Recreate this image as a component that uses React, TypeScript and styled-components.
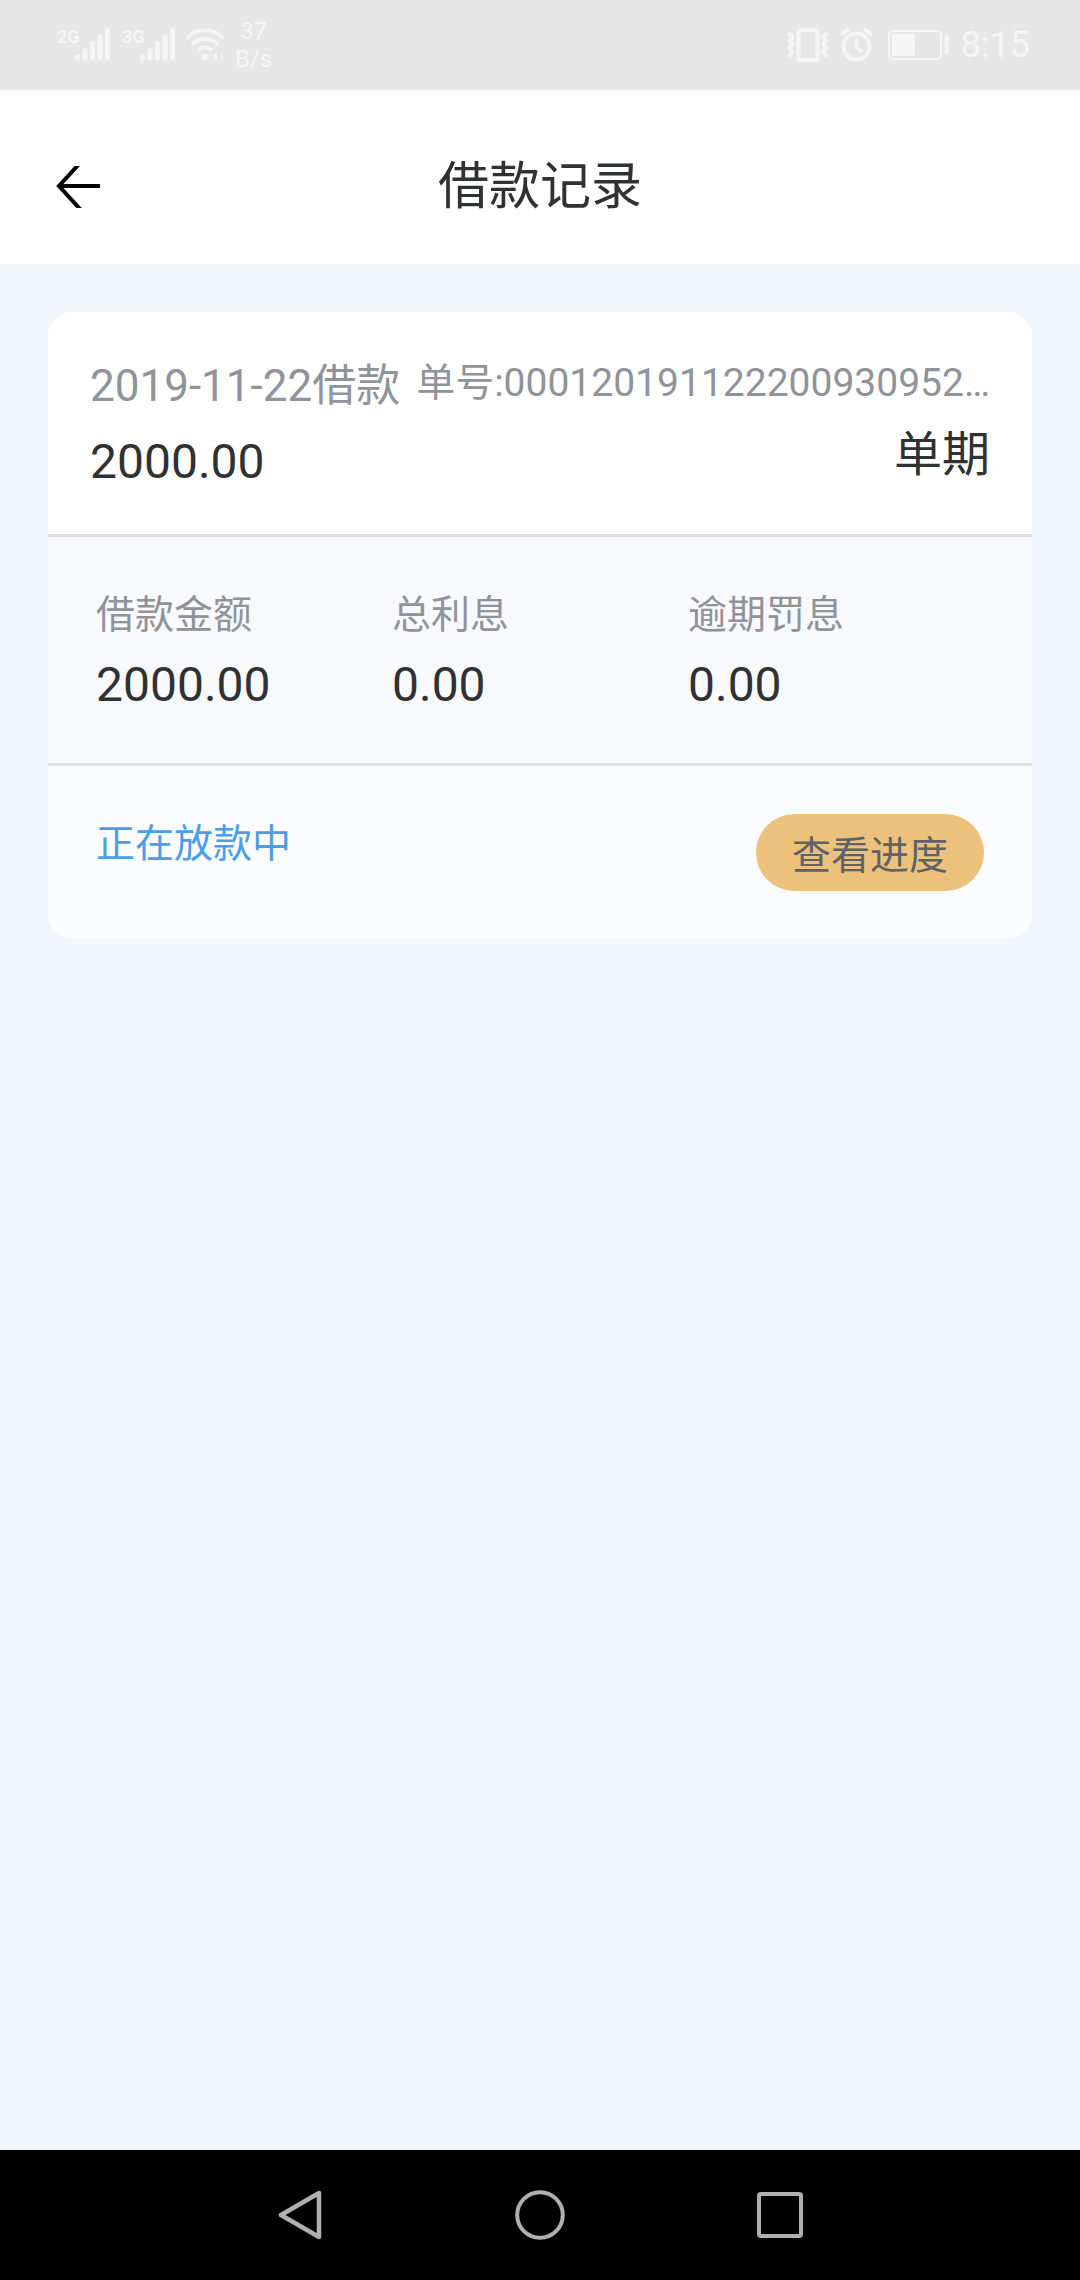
import React from "react";
import styled, { createGlobalStyle } from "styled-components";

const GlobalStyle = createGlobalStyle`
  * { box-sizing: border-box; }
  body {
    margin: 0;
    background: #f1f5fe;
    font-family: Roboto, "Noto Sans CJK SC", sans-serif;
    color: #303133;
  }
  button { font-family: inherit; border: 0; padding: 0; cursor: pointer; }
`;

const Screen = styled.div`
  display: flex;
  flex-direction: column;
  min-height: 100vh;
`;

const StatusBar = styled.div`
  display: flex;
  align-items: center;
  justify-content: space-between;
  height: 90px;
  padding: 0 50px 0 56px;
  background: #e6e6e6;
  color: #f5f5f5;
`;

const StatusGroup = styled.div<{ $gap: number }>`
  display: flex;
  align-items: center;
  gap: ${(p) => p.$gap}px;
  svg { display: block; }
`;

const NetSpeed = styled.div`
  font-size: 24px;
  line-height: 28px;
  text-align: center;
`;

const Clock = styled.time`
  font-size: 36px;
  line-height: 48px;
`;

const Header = styled.header`
  display: grid;
  grid-template-columns: 1fr auto 1fr;
  align-items: center;
  padding: 49px 48px 29px;
  background: #ffffff;
`;

const BackButton = styled.button`
  justify-self: start;
  background: transparent;
  width: 60px;
  height: 60px;
  svg { display: block; margin: auto; }
`;

const Title = styled.h1`
  margin: 0;
  font-size: 51px;
  line-height: 96px;
  font-weight: 400;
`;

const Content = styled.main`
  flex: 1;
  padding: 48px;
`;

const Card = styled.article`
  border-radius: 24px;
  overflow: hidden;
  background: #fbfcff;
`;

const Summary = styled.div`
  display: flex;
  justify-content: space-between;
  padding: 36px 42px 34px;
  background: #ffffff;
  border-bottom: 3px solid #dcdfe4;
`;

const SummaryMain = styled.div`
  line-height: 76px;
`;

const SummarySide = styled.div`
  line-height: 71px;
  text-align: right;
`;

const LoanDate = styled.div`
  font-size: 44px;
  color: #909399;
  white-space: nowrap;
`;

const OrderNo = styled.div`
  font-size: 39px;
  color: #909399;
  white-space: nowrap;
`;

const Strong = styled.div`
  font-size: 48px;
`;

const Figures = styled.dl`
  display: grid;
  grid-template-columns: repeat(3, 1fr);
  margin: 0;
  padding: 43px 48px;
  line-height: 70px;
  background: #f8f9fd;
  border-bottom: 3px solid #dcdfe4;
`;

const FigureLabel = styled.dt`
  font-size: 39px;
  color: #909399;
`;

const FigureValue = styled.dd`
  margin: 0;
  font-size: 48px;
`;

const Footer = styled.div`
  display: flex;
  justify-content: space-between;
  align-items: flex-start;
  padding: 43px 48px 48px;
`;

const State = styled.div`
  font-size: 39px;
  line-height: 70px;
  color: #4a9ee9;
`;

const ProgressButton = styled.button`
  margin-top: 5px;
  padding: 7px 36px 0;
  height: 77px;
  border-radius: 39px;
  background: #ebc17c;
  color: #606266;
  font-size: 39px;
  line-height: 70px;
`;

const NavBar = styled.nav`
  display: flex;
  justify-content: center;
  height: 130px;
  background: #000000;
`;

const NavButton = styled.button`
  display: flex;
  align-items: center;
  justify-content: center;
  width: 240px;
  background: transparent;
`;

const Signal = ({ label }: { label: string }) => (
  <svg width="56" height="46" viewBox="0 -6 56 46" fill="#f5f5f5">
    <text x="1" y="15" fontFamily="Roboto, sans-serif" fontWeight="700" fontSize="18">{label}</text>
    <rect x="19" y="26" width="5" height="7" rx="2.5" />
    <rect x="26.5" y="20" width="5" height="13" rx="2.5" />
    <rect x="34" y="13" width="5" height="20" rx="2.5" />
    <rect x="41.5" y="6" width="5" height="27" rx="2.5" />
    <rect x="49" y="0" width="5" height="33" rx="2.5" />
  </svg>
);

const Wifi = () => (
  <svg width="40" height="34" viewBox="0 0 40 34" fill="none" stroke="#f5f5f5" strokeWidth="4" strokeLinecap="round">
    <path d="M2 9a25 25 0 0 1 34 0" />
    <path d="M7.5 15.5a17 17 0 0 1 23 0" />
    <path d="M13 21.5a9 9 0 0 1 12 0" />
    <circle cx="19" cy="29" r="3.4" fill="#f5f5f5" stroke="none" />
    <path d="M25.5 29.5l5.5-5.5v9h-2v-3.5z" fill="#f5f5f5" stroke="none" />
    <path d="M34 24l5.5 5-5.5 4z" fill="#ebebeb" stroke="none" />
  </svg>
);

const Vibrate = () => (
  <svg width="43" height="34" viewBox="0 0 43 34" fill="none" stroke="#f5f5f5" strokeLinecap="round" strokeLinejoin="round">
    <rect x="11.5" y="2" width="19" height="30" rx="2" strokeWidth="4" />
    <path d="M2.5 6l3 3.5-3 3.5 3 3.5-3 3.5 3 3.5-3 4M39.5 6l-3.5 3.5 3 3.5-3 3.5 3 3.5-3 3.5 3.5 4" strokeWidth="4" />
  </svg>
);

const Alarm = () => (
  <svg width="34" height="34" viewBox="0 0 34 34" fill="none" stroke="#f5f5f5" strokeWidth="4" strokeLinecap="round" strokeLinejoin="round">
    <circle cx="16.5" cy="18.5" r="13" />
    <path d="M16.5 12v7l5 4.5M2.5 6l5-4M30.5 6l-5-4" />
  </svg>
);

const Battery = () => (
  <svg width="67" height="30" viewBox="-4 0 67 30" fill="#f5f5f5">
    <rect x="1" y="1" width="52" height="28" rx="4" fill="none" stroke="#f5f5f5" strokeWidth="2" />
    <rect x="4" y="4" width="23" height="22" rx="1" />
    <rect x="56.5" y="5" width="4.5" height="19" rx="2" />
  </svg>
);

const figures = [
  { label: "借款金额", value: "2000.00" },
  { label: "总利息", value: "0.00" },
  { label: "逾期罚息", value: "0.00" },
];

export default function App() {
  return (
    <Screen>
      <GlobalStyle />
      <StatusBar>
        <StatusGroup $gap={9}>
          <Signal label="2G" />
          <Signal label="3G" />
          <Wifi />
          <NetSpeed>37<br />B/s</NetSpeed>
        </StatusGroup>
        <StatusGroup $gap={10}>
          <Vibrate />
          <Alarm />
          <Battery />
          <Clock>8:15</Clock>
        </StatusGroup>
      </StatusBar>

      <Header>
        <BackButton aria-label="返回">
          <svg width="44" height="42" viewBox="0 0 44 42" fill="none" stroke="#000000">
            <path d="M3 20H44" strokeWidth="4" />
            <path d="M29.5-9L3 20L29.5 49" strokeWidth="4" />
          </svg>
        </BackButton>
        <Title>借款记录</Title>
      </Header>

      <Content>
        <Card>
          <Summary>
            <SummaryMain>
              <LoanDate>2019-11-22借款</LoanDate>
              <Strong>2000.00</Strong>
            </SummaryMain>
            <SummarySide>
              <OrderNo>单号:000120191122200930952…</OrderNo>
              <Strong>单期</Strong>
            </SummarySide>
          </Summary>
          <Figures>
            {figures.map((f) => (
              <div key={f.label}>
                <FigureLabel>{f.label}</FigureLabel>
                <FigureValue>{f.value}</FigureValue>
              </div>
            ))}
          </Figures>
          <Footer>
            <State>正在放款中</State>
            <ProgressButton>查看进度</ProgressButton>
          </Footer>
        </Card>
      </Content>

      <NavBar>
        <NavButton aria-label="后退">
          <svg width="44" height="50" viewBox="0 0 44 50" fill="none" stroke="#b0b0b0" strokeWidth="4.5" strokeLinejoin="round">
            <path d="M41 3V47L3 25Z" />
          </svg>
        </NavButton>
        <NavButton aria-label="主屏幕">
          <svg width="50" height="50" viewBox="0 0 50 50" fill="none" stroke="#b0b0b0" strokeWidth="4">
            <circle cx="25" cy="25" r="22.8" />
          </svg>
        </NavButton>
        <NavButton aria-label="最近任务">
          <svg width="46" height="46" viewBox="0 0 46 46" fill="none" stroke="#b0b0b0" strokeWidth="4">
            <rect x="2" y="2" width="42" height="42" rx="2" />
          </svg>
        </NavButton>
      </NavBar>
    </Screen>
  );
}
